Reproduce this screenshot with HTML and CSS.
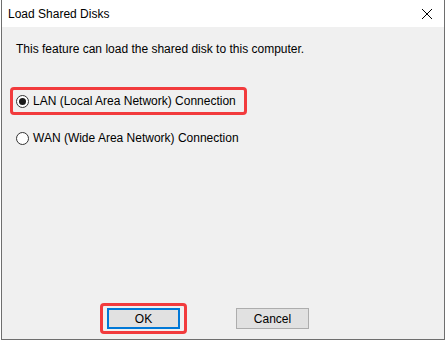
FILE: index.html
```html
<!DOCTYPE html>
<html lang="en">
  <head>
    <meta charset="UTF-8" />
    <title>Load Shared Disks</title>
    <link rel="stylesheet" href="styles.css">
  </head>
  <body>
    <div class="dialog">
      <div class="titlebar">
        <span class="title">Load Shared Disks</span>
        <span class="close">
          <svg width="12" height="12" viewBox="0 0 12 12">
            <path d="M1 1 L11 11 M11 1 L1 11" stroke="#000" stroke-width="1" fill="none" />
          </svg>
        </span>
      </div>
      <div class="content">
        <p class="intro">This feature can load the shared disk to this computer.</p>
        <div class="options">
          <label class="option highlight">
            <span class="radio checked"></span>
            LAN (Local Area Network) Connection
          </label>
          <label class="option">
            <span class="radio"></span>
            WAN (Wide Area Network) Connection
          </label>
        </div>
      </div>
      <div class="buttons">
        <div class="btn-mark">
          <button class="btn default">OK</button>
        </div>
        <button class="btn">Cancel</button>
      </div>
    </div>
  </body>
</html>
```

FILE: styles.css
```css
body {
  margin: 0;
  background-color: #ffffff;
  font-family: "Liberation Sans", Arial, sans-serif;
  font-size: 12px;
  color: #000000;
}

.dialog {
  box-sizing: border-box;
  width: 444px;
  height: 340px;
  margin-left: 1px;
  border: 1px solid #6e6e6e;
  border-top: none;
  background-color: #f0f0f0;
  display: flex;
  flex-direction: column;
}

.titlebar {
  height: 27px;
  background-color: #ffffff;
  display: flex;
  align-items: center;
  justify-content: space-between;
  padding: 0 11px 0 6px;
}

.close {
  display: flex;
}

.content {
  flex: 1;
  padding: 15px 0 0 14px;
}

.intro {
  margin: 0;
  line-height: 15px;
}

.options {
  margin-top: 30px;
  margin-left: -6px;
  display: flex;
  flex-direction: column;
  gap: 9px;
}

.option {
  display: flex;
  align-items: center;
  gap: 4px;
  height: 28px;
  box-sizing: border-box;
  padding: 0 8px 0 3px;
  border: 3px solid transparent;
  align-self: flex-start;
}

.highlight {
  border-color: #f23b3d;
  border-radius: 4px;
}

.radio {
  box-sizing: border-box;
  width: 13px;
  height: 13px;
  border: 1px solid #333333;
  border-radius: 50%;
  background-color: #ffffff;
  display: flex;
  align-items: center;
  justify-content: center;
}

.radio.checked::after {
  content: "";
  width: 7px;
  height: 7px;
  border-radius: 50%;
  background-color: #1a1a1a;
}

.buttons {
  display: flex;
  align-items: center;
  padding: 0 0 5px 98px;
  gap: 49px;
}

.btn-mark {
  border: 3px solid #f23b3d;
  border-radius: 4px;
  padding: 2px 4px;
}

.btn {
  box-sizing: border-box;
  width: 73px;
  height: 21px;
  font-family: inherit;
  font-size: 12px;
  background-color: #e1e1e1;
  border: 1px solid #adadad;
  margin: 0;
  padding: 0;
}

.btn.default {
  border: 2px solid #0078d7;
}
```
